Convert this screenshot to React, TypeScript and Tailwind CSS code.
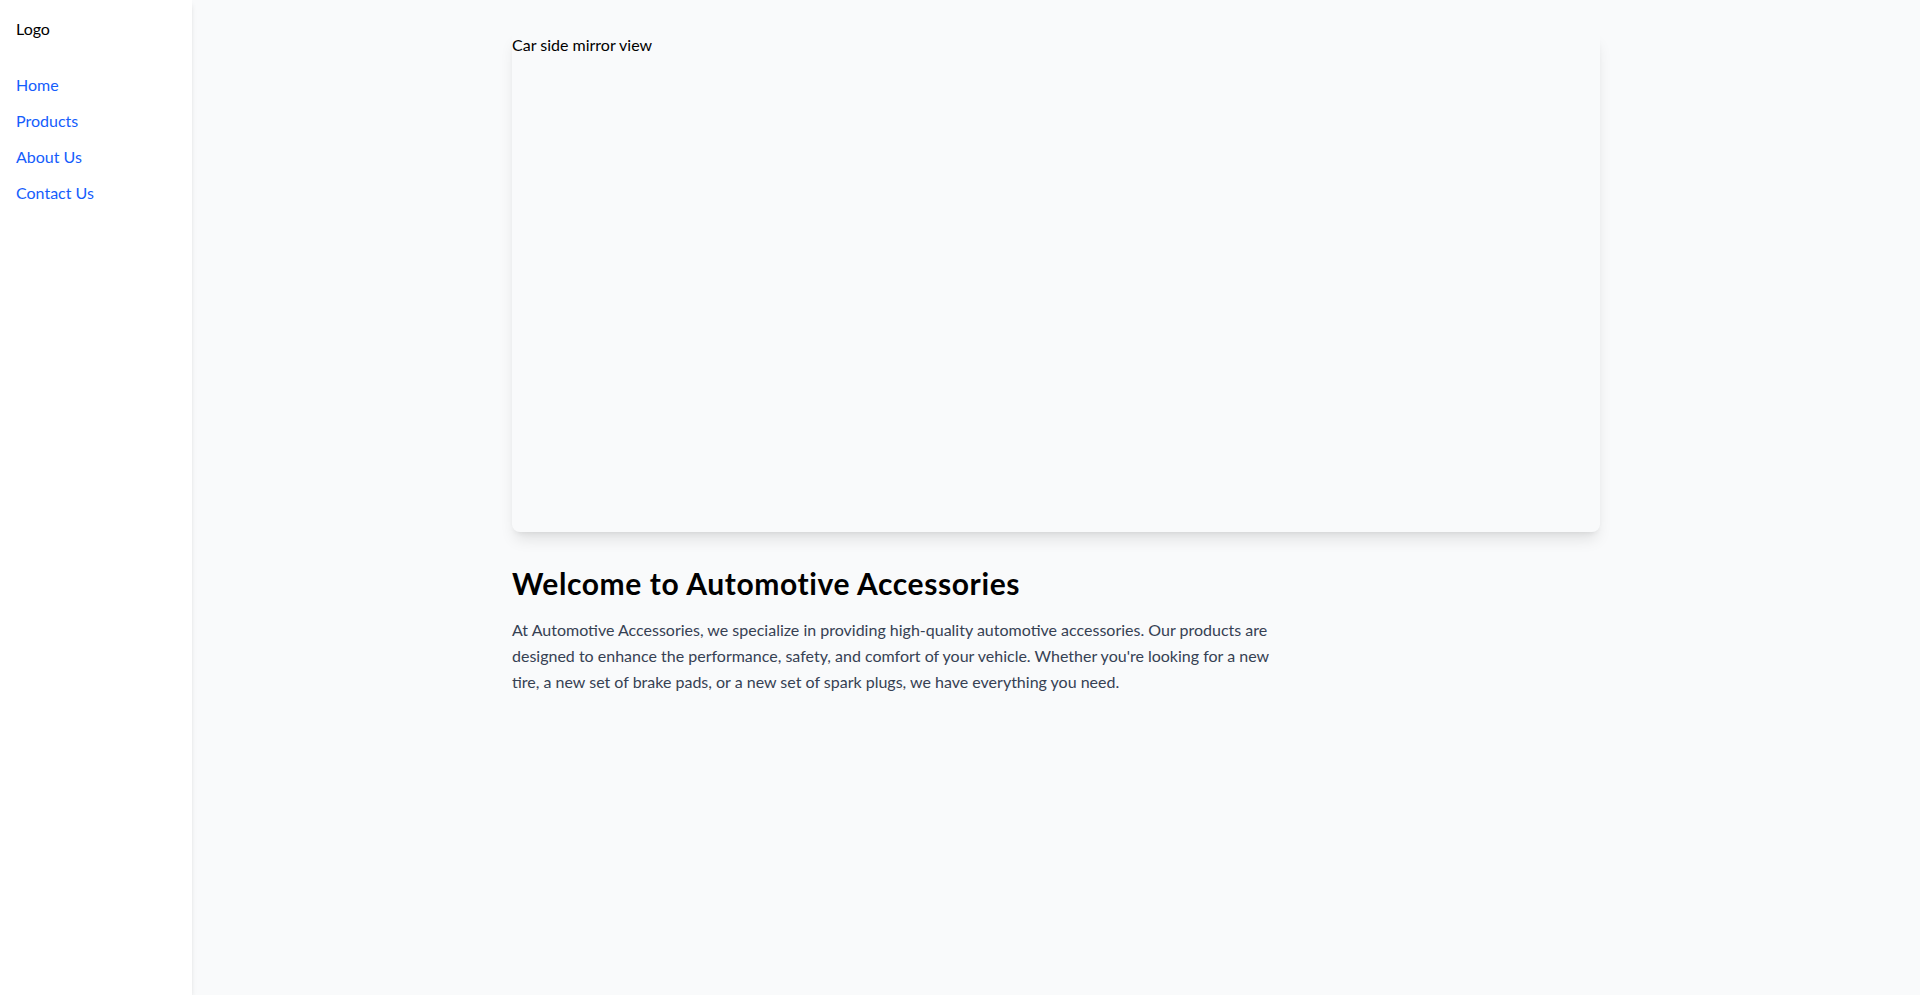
export default function App() {
  return (
    <div className="flex min-h-screen bg-gray-50 font-['Lato','Segoe_UI',sans-serif]">
      <aside className="w-48 shrink-0 bg-white p-4 shadow-md">
        <div className="mb-8 pt-px text-black">Logo</div>
        <nav className="flex flex-col gap-3">
          <a href="#" className="text-blue-600">Home</a>
          <a href="#" className="text-blue-600">Products</a>
          <a href="#" className="text-blue-600">About Us</a>
          <a href="#" className="text-blue-600">Contact Us</a>
        </nav>
      </aside>
      <main className="flex-1">
        <div className="mx-auto max-w-6xl px-8 py-8">
          <div className="h-[500px] w-full rounded-lg pt-px text-black shadow-lg">Car side mirror view</div>
          <h1 className="mt-8 mb-4 pt-px text-3xl font-bold tracking-[0.02em] text-black">
            Welcome to Automotive Accessories
          </h1>
          <p className="max-w-3xl leading-relaxed text-gray-700">
            At Automotive Accessories, we specialize in providing high-quality automotive accessories. Our products are
            designed to enhance the performance, safety, and comfort of your vehicle. Whether you're looking for a new
            tire, a new set of brake pads, or a new set of spark plugs, we have everything you need.
          </p>
        </div>
      </main>
    </div>
  );
}
